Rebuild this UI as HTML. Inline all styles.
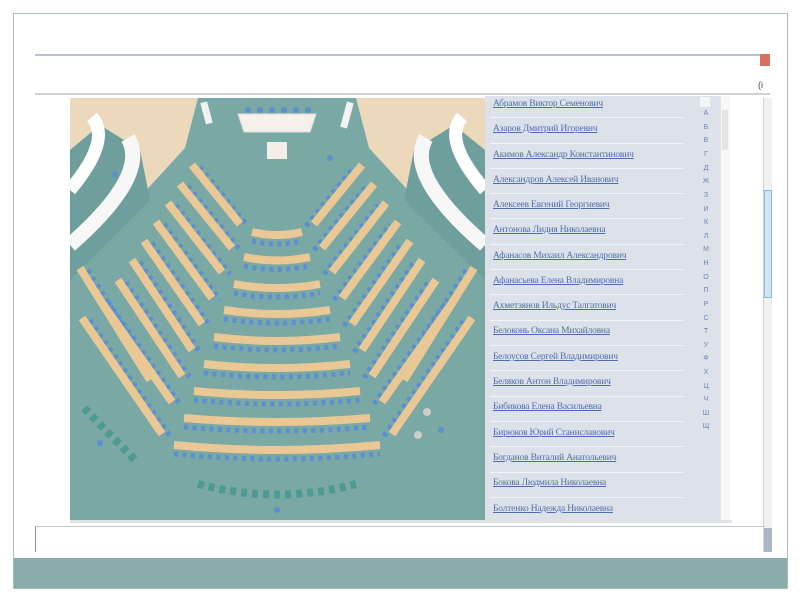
<!DOCTYPE html>
<html><head><meta charset="utf-8">
<style>
*{margin:0;padding:0;box-sizing:border-box}
body{width:800px;height:600px;background:#fff;position:relative;overflow:hidden;font-family:"Liberation Serif","Noto Serif CJK SC",serif}
.abs{position:absolute}
.name{position:absolute;left:493px;font-size:9.5px;color:#4d6db0;text-decoration:underline;white-space:nowrap;letter-spacing:-0.2px}
.sep{position:absolute;left:490px;width:194px;height:1px;background:#f2f4f7}
.let{position:absolute;left:700px;width:12px;text-align:center;font-family:"Liberation Sans",sans-serif;font-size:7px;color:#6a85b8}
</style></head><body>
<div class="abs" style="left:13px;top:13px;width:775px;height:576px;border:1px solid #a9bdbd"></div>
<div class="abs" style="left:14px;top:558px;width:773px;height:30px;background:#8aacab"></div>
<div class="abs" style="left:35px;top:54px;width:735px;height:2px;background:#b7c4c8"></div>
<div class="abs" style="left:760px;top:54px;width:10px;height:12px;background:#d7705e"></div>
<div class="abs" style="left:35px;top:93px;width:735px;height:2px;background:#cfd3d6"></div>
<div class="abs" style="left:758px;top:80px;font-size:9px;color:#444;font-family:'Liberation Sans',sans-serif">(i</div>
<svg class="abs" style="left:0;top:0" width="800" height="600">
<defs>
<clipPath id="h"><rect x="70" y="98" width="415" height="422"/></clipPath>
<g id="LW">
<path d="M192,165 L240,224"/><path d="M180,184 L232,248"/><path d="M168,203 L222,272"/><path d="M156,222 L212,298"/><path d="M144,241 L202,324"/><path d="M132,260 L192,350"/><path d="M118,280 L182,376"/><path d="M100,300 L172,402"/><path d="M82,318 L162,434"/><path d="M80,268 L150,380"/>
</g>
<g id="RW">
<path d="M314,224 L362,165"/><path d="M322,248 L374,184"/><path d="M332,272 L386,203"/><path d="M342,298 L398,222"/><path d="M352,324 L410,241"/><path d="M362,350 L422,260"/><path d="M372,376 L436,280"/><path d="M382,402 L454,300"/><path d="M392,434 L472,318"/><path d="M474,268 L404,380"/>
</g>
<g id="CW">
<path d="M252,232 Q277,238 302,232"/><path d="M244,257 Q277,264 310,257"/><path d="M234,284 Q277,292 320,284"/><path d="M224,310 Q277,318 330,310"/><path d="M214,337 Q277,345 340,337"/><path d="M204,364 Q277,372 350,364"/><path d="M194,391 Q277,399 360,391"/><path d="M184,418 Q277,426 370,418"/><path d="M174,445 Q277,455 380,445"/>
</g>
</defs>
<g clip-path="url(#h)">
<rect x="70" y="98" width="415" height="422" fill="#7aa8a5"/>
<polygon points="70,98 198,98 185,148 105,235 70,245" fill="#ecd9bc"/>
<polygon points="485,98 356,98 369,148 449,235 485,245" fill="#ecd9bc"/>
<polygon points="70,150 100,125 140,150 150,200 70,280" fill="#6f9f9c"/>
<polygon points="485,150 454,125 414,150 404,200 485,280" fill="#6f9f9c"/>
<path d="M92,117 Q112,140 70,190" stroke="#fff" stroke-width="13" fill="none"/>
<path d="M128,138 Q150,175 70,245" stroke="#f7f7f7" stroke-width="15" fill="none"/>
<path d="M462,117 Q442,140 485,190" stroke="#fff" stroke-width="13" fill="none"/>
<path d="M426,138 Q404,175 485,245" stroke="#f7f7f7" stroke-width="15" fill="none"/>
<polygon points="238,114 316,114 310,132 244,132" fill="#f5f1ea" stroke="#ddd"/>
<g fill="#5b8fcf"><circle cx="248" cy="110" r="3"/><circle cx="260" cy="110" r="3"/><circle cx="272" cy="110" r="3"/><circle cx="284" cy="110" r="3"/><circle cx="296" cy="110" r="3"/><circle cx="308" cy="110" r="3"/><circle cx="330" cy="158" r="3"/><circle cx="115" cy="174" r="3"/><circle cx="100" cy="443" r="3"/><circle cx="277" cy="510" r="3"/><circle cx="441" cy="430" r="3"/></g>
<rect x="203" y="102" width="7" height="22" fill="#f3f3f3" transform="rotate(-15 206 113)"/>
<rect x="344" y="102" width="7" height="26" fill="#f3f3f3" transform="rotate(15 347 113)"/>
<rect x="267" y="142" width="20" height="17" fill="#f3efe6"/>
<g fill="none" stroke="#5b8fcf" stroke-width="5" stroke-dasharray="4 4.5">
<use href="#LW" transform="translate(8,2)"/>
<use href="#RW" transform="translate(-8,2)"/>
<use href="#CW" transform="translate(0,9)"/>
</g>
<g fill="none" stroke="#e9c896" stroke-width="8">
<use href="#LW"/><use href="#RW"/><use href="#CW"/>
</g>
<path d="M198,484 Q277,505 356,484" stroke="#4e9a93" stroke-width="8" stroke-dasharray="6 5" fill="none"/>
<path d="M84,408 L135,460" stroke="#4e9a93" stroke-width="8" stroke-dasharray="6 5" fill="none"/>
<circle cx="427" cy="412" r="4" fill="#ccc"/><circle cx="418" cy="435" r="4" fill="#ccc"/>
</g>
</svg>
<div class="abs" style="left:485px;top:96px;width:235px;height:424px;background:#dde2ea"></div>
<div class="abs" style="left:700px;top:97px;width:10px;height:10px;background:#f4f6f9"></div>
<div class="abs" style="left:720px;top:96px;width:10px;height:424px;background:#f6f7f8;border-left:1px solid #e2e4e6"></div>
<div class="abs" style="left:722px;top:110px;width:6px;height:40px;background:#e2e4e6"></div>
<div class="abs" style="left:70px;top:520px;width:662px;height:3px;background:#e0e3e6"></div>
<div class="abs" style="left:763px;top:98px;width:9px;height:454px;background:#f0f1f3;border-left:1px solid #d0d4d8"></div>
<div class="abs" style="left:764px;top:190px;width:8px;height:108px;background:#cfe6f6;border:1px solid #8fb8d6"></div>
<div class="abs" style="left:764px;top:528px;width:8px;height:24px;background:#a9b7c6"></div>
<div class="abs" style="left:35px;top:526px;width:730px;height:26px;border-top:1px solid #c5c9cd;border-left:1px solid #999"></div>

<span class="name" style="top:99px">Абрамов Виктор Семенович</span>
<div class="sep" style="top:117px"></div>
<span class="name" style="top:124px">Азаров Дмитрий Игоревич</span>
<div class="sep" style="top:143px"></div>
<span class="name" style="top:150px">Акимов Александр Константинович</span>
<div class="sep" style="top:168px"></div>
<span class="name" style="top:175px">Александров Алексей Иванович</span>
<div class="sep" style="top:193px"></div>
<span class="name" style="top:200px">Алексеев Евгений Георгиевич</span>
<div class="sep" style="top:218px"></div>
<span class="name" style="top:225px">Антонова Лидия Николаевна</span>
<div class="sep" style="top:244px"></div>
<span class="name" style="top:251px">Афанасов Михаил Александрович</span>
<div class="sep" style="top:269px"></div>
<span class="name" style="top:276px">Афанасьева Елена Владимировна</span>
<div class="sep" style="top:294px"></div>
<span class="name" style="top:301px">Ахметзянов Ильдус Талгатович</span>
<div class="sep" style="top:320px"></div>
<span class="name" style="top:326px">Белоконь Оксана Михайловна</span>
<div class="sep" style="top:345px"></div>
<span class="name" style="top:352px">Белоусов Сергей Владимирович</span>
<div class="sep" style="top:370px"></div>
<span class="name" style="top:377px">Беляков Антон Владимирович</span>
<div class="sep" style="top:396px"></div>
<span class="name" style="top:402px">Бибикова Елена Васильевна</span>
<div class="sep" style="top:421px"></div>
<span class="name" style="top:428px">Бирюков Юрий Станиславович</span>
<div class="sep" style="top:446px"></div>
<span class="name" style="top:453px">Богданов Виталий Анатольевич</span>
<div class="sep" style="top:472px"></div>
<span class="name" style="top:478px">Бокова Людмила Николаевна</span>
<div class="sep" style="top:497px"></div>
<span class="name" style="top:504px">Болтенко Надежда Николаевна</span>

<span class="let" style="top:110px">А</span><span class="let" style="top:124px">Б</span><span class="let" style="top:137px">В</span><span class="let" style="top:151px">Г</span><span class="let" style="top:165px">Д</span><span class="let" style="top:178px">Ж</span><span class="let" style="top:192px">З</span><span class="let" style="top:206px">И</span><span class="let" style="top:219px">К</span><span class="let" style="top:233px">Л</span><span class="let" style="top:246px">М</span><span class="let" style="top:260px">Н</span><span class="let" style="top:274px">О</span><span class="let" style="top:287px">П</span><span class="let" style="top:301px">Р</span><span class="let" style="top:315px">С</span><span class="let" style="top:328px">Т</span><span class="let" style="top:342px">У</span><span class="let" style="top:355px">Ф</span><span class="let" style="top:369px">Х</span><span class="let" style="top:383px">Ц</span><span class="let" style="top:396px">Ч</span><span class="let" style="top:410px">Ш</span><span class="let" style="top:423px">Щ</span>
</body></html>
